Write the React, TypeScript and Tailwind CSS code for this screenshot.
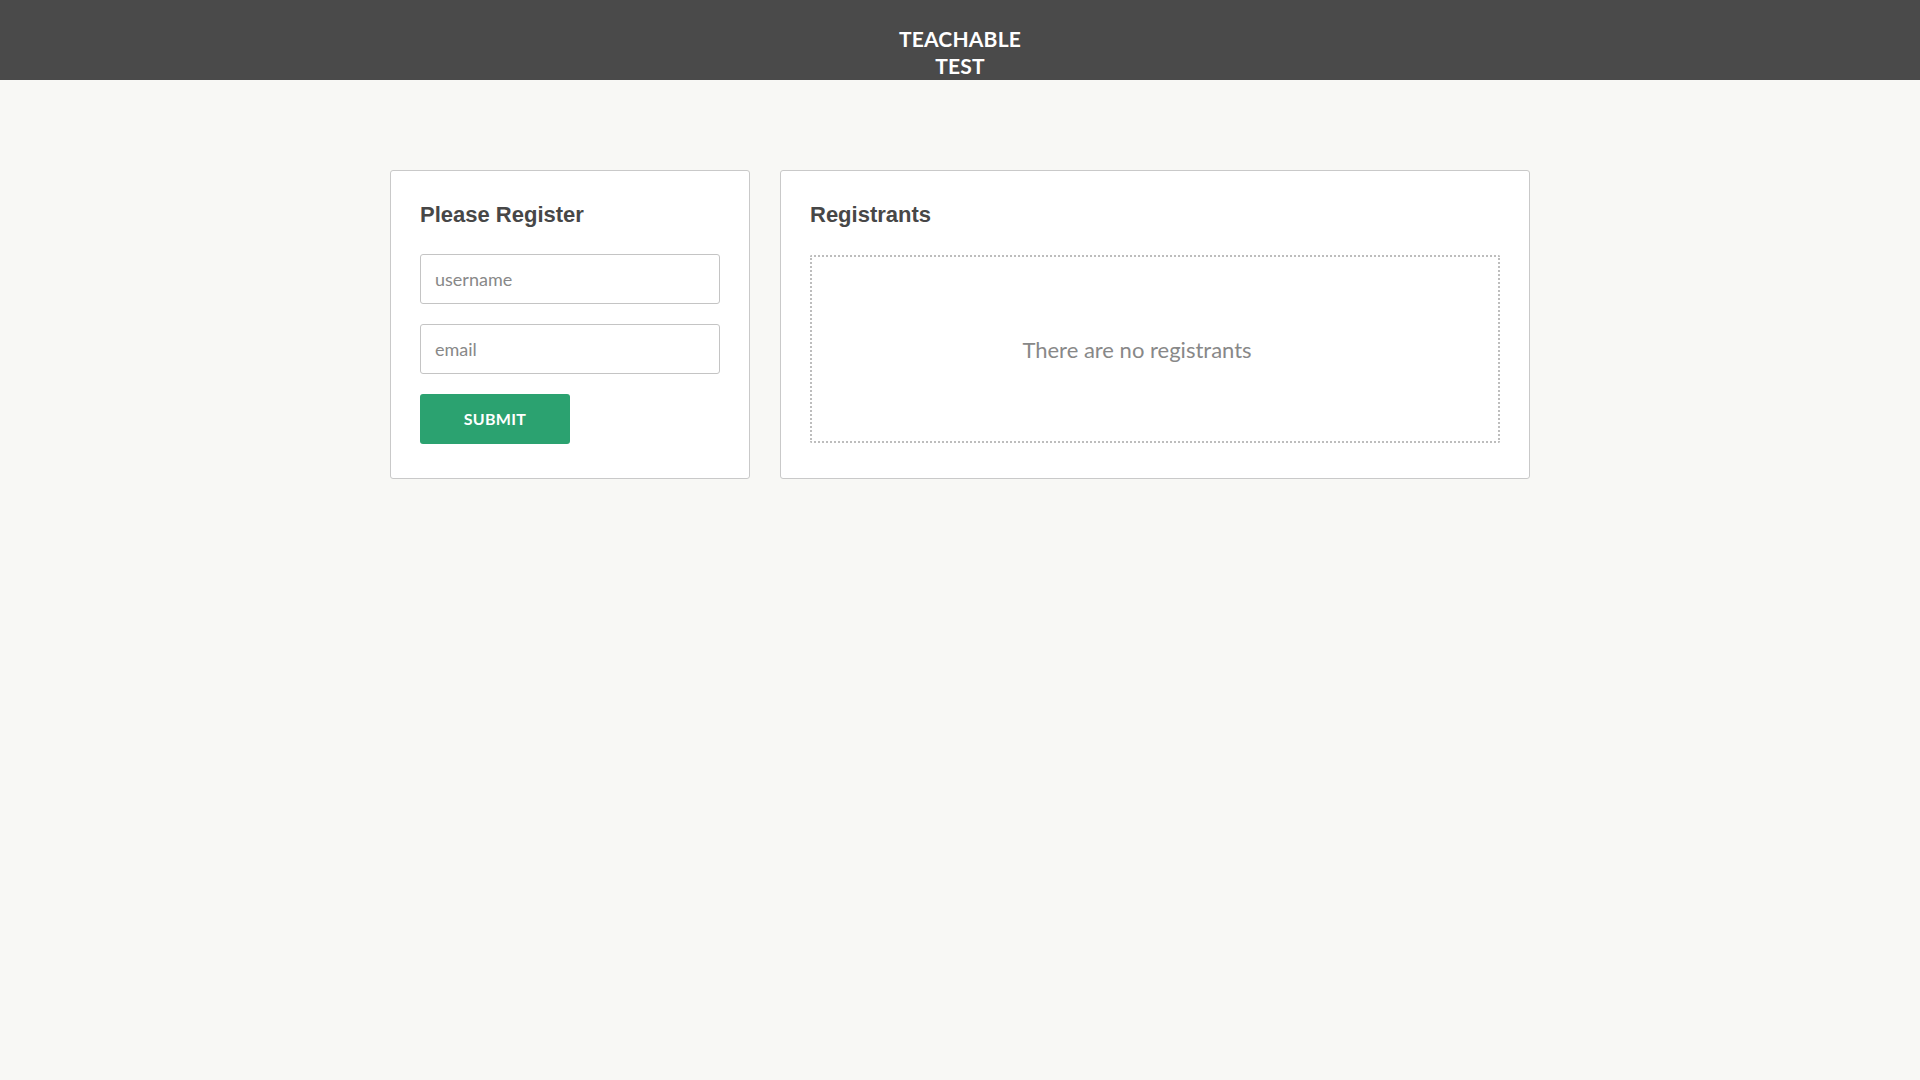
import React from "react";

export default function App() {
  return (
    <div className="min-h-screen w-full bg-[#f8f8f5]" style={{ fontFamily: "Lato, 'Open Sans', sans-serif" }}>
      <header className="h-[80px] w-full bg-[#4a4a4a] flex justify-center pt-[25px]">
        <div className="text-white font-bold text-[21px] leading-[27px] text-center tracking-[0.2px]">
          TEACHABLE
          <br />
          TEST
        </div>
      </header>
      <main className="w-[1140px] mx-auto mt-[90px] flex gap-[30px] items-start">
        <section className="w-[360px] bg-white border border-[#c9c9c9] rounded-[3px] px-[29px] pt-[27px] pb-[34px]">
          <h2 className="text-[22px] leading-[34px] font-bold text-[#474747]" style={{ fontFamily: "'Liberation Sans', Arial, sans-serif" }}>
            Please Register
          </h2>
          <form className="mt-[22px] flex flex-col gap-[20px]" onSubmit={(e) => e.preventDefault()}>
            <input
              placeholder="username"
              className="w-[300px] h-[50px] border border-[#c4c4c4] rounded-[3px] px-[14px] text-[18px] text-[#444] placeholder:text-[#888] outline-none bg-white"
            />
            <input
              placeholder="email"
              className="w-[300px] h-[50px] border border-[#c4c4c4] rounded-[3px] px-[14px] text-[18px] text-[#444] placeholder:text-[#888] outline-none bg-white"
            />
            <button
              type="submit"
              className="w-[150px] h-[50px] bg-[#2ba270] rounded-[3px] text-white font-bold text-[16px] tracking-[0.3px]"
            >
              SUBMIT
            </button>
          </form>
        </section>
        <section className="w-[750px] bg-white border border-[#c9c9c9] rounded-[3px] px-[29px] pt-[27px] pb-[35px]">
          <h2 className="text-[22px] leading-[34px] font-bold text-[#474747]" style={{ fontFamily: "'Liberation Sans', Arial, sans-serif" }}>
            Registrants
          </h2>
          <div className="mt-[23px] h-[188px] border-2 border-dotted border-[#bdbdbd] rounded-[2px] flex items-center justify-center pr-[36px]">
            <p className="text-[22px] text-[#888]">There are no registrants</p>
          </div>
        </section>
      </main>
    </div>
  );
}
